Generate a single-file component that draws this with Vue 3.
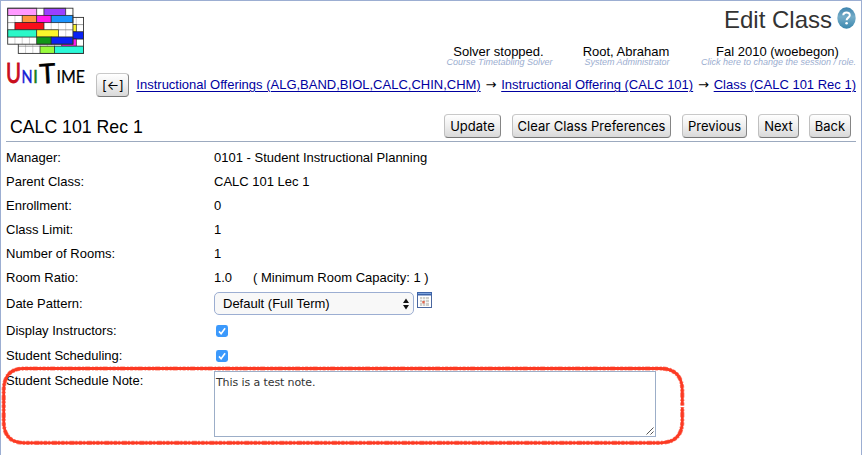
<script setup>
import { ref } from 'vue'

const frontCells = [
  [0, 0, 4, '#ff99ff'], [5, 0, 3, '#9940ff'],
  [2, 1, 2, '#ff9640'], [4, 1, 2, '#ff1aec'], [6, 1, 3, '#1a93ff'],
  [1, 2, 4, '#f80d1b'],
  [0, 3, 4, '#2bf8c8'], [4, 3, 3, '#fcf62c'],
  [4, 4, 2, '#129718'], [6, 4, 3, '#0a22f5'],
]
const backCells = [
  [7, 1, 1, '#fcf62c'], [7, 2, 2, '#0a22f5'], [6, 3, 2, '#ff1aec'],
  [3, 4, 2, '#98fb3e'], [5, 4, 4, '#2bf8d8'],
]
const actions = [
  { label: 'Update', cls: 'update' },
  { label: 'Clear Class Preferences', cls: 'clear' },
  { label: 'Previous', cls: 'previous' },
  { label: 'Next', cls: 'next' },
  { label: 'Back', cls: 'back' },
]
const facts = [
  ['Manager:', '0101 - Student Instructional Planning'],
  ['Parent Class:', 'CALC 101 Lec 1'],
  ['Enrollment:', '0'],
  ['Class Limit:', '1'],
  ['Number of Rooms:', '1'],
]
const note = ref('This is a test note.')
const checks = ['Display Instructors:', 'Student Scheduling:']
</script>

<template>
  <div class="page">
    <header class="header">
      <svg class="logo" width="84" height="86" viewBox="0 0 84 86">
        <g v-for="(grid, g) in [backCells, frontCells]" :key="g" :transform="g ? 'translate(2.7 3.2)' : 'translate(13.3 12.4)'">
          <rect width="65.25" height="36" fill="#fff" />
          <path
            v-for="n in 8" :key="'v' + n" :d="`M${n * 7.25} 0V36`"
            stroke="#bdbdbd" stroke-width=".7"
          />
          <path v-for="n in 4" :key="'h' + n" :d="`M0 ${n * 7.2}H65.25`" stroke="#777" stroke-width=".7" />
          <rect
            v-for="(c, i) in grid" :key="i" :x="c[0] * 7.25" :y="c[1] * 7.2"
            :width="c[2] * 7.25" height="7.2" :fill="c[3]" stroke="#222" stroke-opacity=".85" stroke-width=".75"
          />
          <rect width="65.25" height="36" fill="none" stroke="#333" stroke-width=".9" />
        </g>
        <g class="wordmark">
          <text x="1" y="77.5" font-size="27" textLength="15" lengthAdjust="spacingAndGlyphs" fill="#c90d1c" stroke="#c90d1c" stroke-width=".9">U</text>
          <text x="16.5" y="77.5" font-size="17" textLength="11" lengthAdjust="spacingAndGlyphs" fill="#1420d4" stroke="#1420d4">N</text>
          <text x="28" y="77.5" font-size="18" fill="#16801c" stroke="#16801c">I</text>
          <text x="34.5" y="78" font-size="27" textLength="16" lengthAdjust="spacingAndGlyphs" stroke="#000" stroke-width=".6" transform="rotate(-3 42 70)">T</text>
          <text x="51.5" y="77.5" font-size="18" textLength="28.5" lengthAdjust="spacingAndGlyphs" stroke="#000" stroke-width=".2">IME</text>
        </g>
      </svg>
      <div class="heading">
        <div class="title-row">
          <h1>Edit Class</h1>
          <svg class="help" width="19" height="22" viewBox="0 0 19 22">
            <defs>
              <linearGradient id="helpFill" x1="0" y1="0" x2="0" y2="1">
                <stop offset="0" stop-color="#3d83ad" /><stop offset=".45" stop-color="#75adc9" /><stop offset="1" stop-color="#3986ac" />
              </linearGradient>
            </defs>
            <ellipse cx="9.5" cy="11" rx="9.2" ry="10.7" fill="url(#helpFill)" />
            <path d="M6.3 8.2C6.3 4.6 12.8 4.5 12.8 8.2C12.8 10.5 9.6 10.8 9.6 13.2" fill="none" stroke="#fff" stroke-width="2" />
            <circle cx="9.6" cy="16.2" r="1.3" fill="#fff" />
          </svg>
        </div>
        <div class="status">
          <div class="info solver"><b>Solver stopped.</b><i>Course Timetabling Solver</i></div>
          <div class="info user"><b>Root, Abraham</b><i>System Administrator</i></div>
          <div class="info session"><b>Fal 2010 (woebegon)</b><i>Click here to change the session / role.</i></div>
        </div>
        <nav class="crumbs">
          <button class="btn return">[←]</button>
          <a class="c1">Instructional Offerings (ALG,BAND,BIOL,CALC,CHIN,CHM)</a>
          <span>→</span>
          <a class="c2">Instructional Offering (CALC 101)</a>
          <span>→</span>
          <a class="c3">Class (CALC 101 Rec 1)</a>
        </nav>
      </div>
    </header>

    <section class="toolbar">
      <h2>CALC 101 Rec 1</h2>
      <div class="actions">
        <button v-for="a in actions" :key="a.label" class="btn" :class="a.cls">{{ a.label }}</button>
      </div>
    </section>

    <main class="form">
      <div v-for="f in facts" :key="f[0]" class="row">
        <span>{{ f[0] }}</span><span>{{ f[1] }}</span>
      </div>
      <div class="row">
        <span>Room Ratio:</span>
        <span class="ratio"><span>1.0</span><span>( Minimum Room Capacity: 1 )</span></span>
      </div>
      <div class="row date">
        <span>Date Pattern:</span>
        <span class="picker">
          <span class="select">
            Default (Full Term)
            <svg width="8" height="12" viewBox="0 0 8 12"><path d="M1 5L4 0.5L7 5ZM1 7H7L4 11.5Z" fill="#111" /></svg>
          </span>
          <svg class="calendar" width="15" height="16" viewBox="0 0 15 16">
            <rect x=".5" y=".5" width="14" height="15" fill="#fff" stroke="#4a679f" />
            <path d="M0 0H15V3.5H0Z" fill="#3e64a8" />
            <path d="M1 1.5H14" stroke="#7da4dd" />
            <rect x="3" y="5" width="9" height="9" fill="#cfcfca" />
            <path d="M3 7.5H12M3 10.5H12M5.5 5V14M8.5 5V14" stroke="#fff" stroke-width=".7" />
            <rect x="5.3" y="9" width="2.4" height="2.4" fill="#e0674e" />
          </svg>
        </span>
      </div>
      <div v-for="(label, i) in checks" :key="label" class="row check-row" :class="{ second: i }">
        <span>{{ label }}</span>
        <svg class="check" width="12" height="12" viewBox="0 0 12 12">
          <rect width="12" height="12" rx="2.4" fill="#3b99fc" />
          <path d="M3 6.4L5.1 8.7L9.1 3.2" fill="none" stroke="#fff" stroke-width="1.6" />
        </svg>
      </div>
      <div class="row note">
        <span>Student Schedule Note:</span>
        <div class="area">
          <textarea v-model="note" spellcheck="false"></textarea>
          <svg class="grip" width="8" height="8" viewBox="0 0 8 8"><path d="M.5 7.5L7.5 .5M4.5 7.5L7.5 4.5" stroke="#555" stroke-width="1" /></svg>
        </div>
        <svg class="marker" width="686" height="82" viewBox="0 0 686 82">
          <path
            class="stroke"
            d="M682.3 40.5V26Q682.3 3.5 660 3.5H24Q3.7 3.5 3.7 26V56Q3.7 77.8 24 77.8H660Q682.3 77.8 682.3 56V42.3"
          />
          <path
            class="stroke bristle"
            d="M682.3 40.5V26Q682.3 3.5 660 3.5H24Q3.7 3.5 3.7 26V56Q3.7 77.8 24 77.8H660Q682.3 77.8 682.3 56V42.3"
          />
        </svg>
      </div>
    </main>
  </div>
</template>

<style>
body { background: #fff; }
</style>

<style scoped>
* { box-sizing: border-box; }
.page {
  height: 455px;
  overflow: hidden;
  border: 1px solid #9caed2;
  border-bottom: 0;
  padding: 0 5px;
  font: 13px/16px "Liberation Sans", Arial, sans-serif;
  color: #000;
}
.header { display: flex; height: 104px; }
.logo { flex: none; margin: 4px 0 0 -1px; }
.wordmark { font-family: Lato, sans-serif; stroke-width: .4px; }
.heading { flex: 1; min-width: 0; display: flex; flex-direction: column; }
.title-row { display: flex; justify-content: flex-end; height: 44px; gap: 5px; padding: 5px 0 0; }
h1 { margin: 0; font-size: 24px; line-height: 28px; font-weight: 400; color: #333; }
.help { margin-top: 1px; }
.status { display: flex; justify-content: flex-end; gap: 31px; height: 27px; }
.info { display: flex; flex-direction: column; align-items: center; white-space: nowrap; }
.info b { font-weight: 400; line-height: 13px; margin-right: 2px; }
.info i { font-size: 9px; line-height: 9px; color: #9caed0; }
.solver { width: 107px; }
.user { width: 86px; }
.session { width: 155px; }
.crumbs { display: flex; justify-content: flex-end; align-items: center; height: 26px; white-space: nowrap; }
.crumbs a { color: #0000a0; text-decoration: underline; text-underline-offset: 2px; text-decoration-thickness: 1px; }
.crumbs span { width: 20.5px; text-align: center; font-family: "DejaVu Sans", sans-serif; }
.btn {
  height: 24px;
  padding: 0;
  border: 1px solid;
  border-color: #c9c9c9 #858585 #777 #c0c0c0;
  border-radius: 4px;
  background: linear-gradient(#fff, #f0f0f0 45%, #d9d9d9);
  font: 13px/20px Inter, sans-serif;
  color: #000;
  white-space: nowrap;
}
.return { width: 33px; margin-right: 7px; }
.toolbar {
  display: flex;
  justify-content: space-between;
  height: 37px;
  border-bottom: 1px solid #9caabf;
  padding: 9px 5px 0 4px;
}
h2 { margin: 3px 0 0; font-size: 17.7px; line-height: 20px; font-weight: 400; }
.actions { display: flex; }
.update { width: 57px; margin-right: 11px; }
.clear { width: 159px; margin-right: 11px; }
.previous { width: 65px; margin-right: 11px; }
.next { width: 41px; margin-right: 10px; }
.back { width: 42px; }
.form { padding-top: 4px; }
.row { position: relative; display: grid; grid-template-columns: 208px 1fr; align-items: center; height: 24px; white-space: nowrap; }
.ratio { display: flex; gap: 21px; }
.date { height: 28px; }
.picker { display: flex; gap: 3px; margin-top: -1px; }
.select {
  display: flex;
  align-items: center;
  justify-content: space-between;
  width: 200px;
  height: 23px;
  padding: 0 3px 0 8px;
  border: 1px solid #9caed2;
  border-radius: 5px;
  background: #f8f8f8;
}
.check-row { height: 26px; }
.check-row.second { height: 24px; }
.check { margin-left: 2px; }
.note { height: 70px; align-items: start; padding-top: 5px; }
.area { position: relative; width: 442px; height: 66px; margin-top: -2px; }
textarea {
  display: block;
  width: 100%;
  height: 100%;
  margin: 0;
  padding: 3px 1px;
  border: 1px solid #9caec8;
  resize: none;
  outline: 0;
  font: 11px/15px "DejaVu Sans", sans-serif;
  letter-spacing: -.1px;
  color: #333;
}
.grip { position: absolute; right: 2px; bottom: 2px; }
.marker { position: absolute; left: -6px; top: -3px; pointer-events: none; }
.stroke { fill: none; stroke: #fc3a24; stroke-width: 2.8px; }
.bristle { stroke-width: 4.2px; stroke-opacity: .65; stroke-dasharray: 3 1.5 1.5 2 5 1 2 1.5; }
</style>
